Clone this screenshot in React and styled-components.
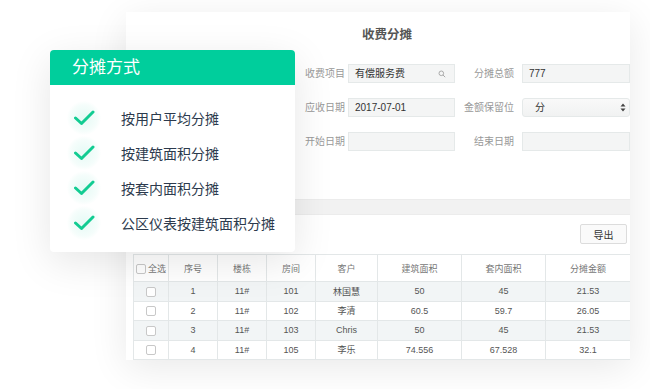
import React from 'react';
import styled, { createGlobalStyle } from 'styled-components';

const GlobalStyle = createGlobalStyle`
  html, body {
    margin: 0;
    padding: 0;
    background: #ffffff;
  }
  body {
    font-family: "Liberation Sans", "Noto Sans CJK SC", sans-serif;
  }
`;

const Stage = styled.div`
  position: relative;
  width: 650px;
  height: 389px;
  overflow: hidden;
  padding: 12px 0 0 126px;
  box-sizing: border-box;
  background: #fff;
`;

const Panel = styled.section`
  width: 504px;
  height: 348px;
  background: #fff;
  box-shadow: 0 8px 36px rgba(0, 0, 0, 0.09);
  overflow: hidden;
  display: flex;
  flex-direction: column;
`;

const PanelTitle = styled.h2`
  margin: 14px 0 0;
  padding-left: 18px;
  font-size: 12.5px;
  line-height: 18px;
  font-weight: bold;
  color: #555;
  text-align: center;
`;

const Form = styled.div`
  margin-top: 20px;
  display: grid;
  grid-template-columns: 222px 107px 67px 108px;
  grid-auto-rows: 19px;
  row-gap: 15px;
`;

const Label = styled.label`
  font-size: 10px;
  color: #999;
  text-align: right;
  line-height: 19px;
  padding-right: ${p => (p.$wide ? '8px' : '3px')};
`;

const Field = styled.div`
  height: 19px;
  box-sizing: border-box;
  background: #f4f5f5;
  border: 1px solid #e5e9e9;
  font-size: 10px;
  color: #333;
  line-height: 17px;
  padding: 0 8px 0 6px;
  display: flex;
  align-items: center;
  justify-content: space-between;
  border-radius: 0;
  ${p => p.$select && 'background: linear-gradient(#f9f9f9, #f1f2f2); padding-left: 12px; padding-right: 3px; border-radius: 3px;'}
`;

const Band = styled.div`
  margin-top: 48px;
  height: 18px;
  background: #f2f2f2;
  border-top: 1px solid #ececec;
  border-bottom: 1px solid #ececec;
  box-sizing: border-box;
`;

const Toolbar = styled.div`
  margin-top: 9px;
  display: flex;
  justify-content: flex-end;
  padding-right: 3px;
`;

const Button = styled.button`
  width: 47px;
  height: 20px;
  border: 1px solid #dcdcdc;
  border-radius: 2px;
  background: #fafafa;
  font-family: inherit;
  font-size: 10px;
  color: #333;
  padding: 0;
`;

const Table = styled.table`
  margin: 10px 0 0 7px;
  border-collapse: collapse;
  table-layout: fixed;
  width: 497px;
  font-size: 9px;
  color: #555;
`;

const Th = styled.th`
  height: 26px;
  font-weight: normal;
  color: #777;
  border: 1px solid #e3e7e8;
  text-align: center;
  padding: 0;
  white-space: nowrap;
`;

const Tr = styled.tr`
  background: ${p => (p.$odd ? '#f2f5f6' : '#fff')};
`;

const Td = styled.td`
  height: 18.5px;
  border: 1px solid #e3e7e8;
  text-align: center;
  padding: 0;
`;

const Box = styled.span`
  display: inline-block;
  width: 8px;
  height: 8px;
  border: 1px solid #c8c8c8;
  border-radius: 2px;
  background: #fff;
  vertical-align: middle;
  margin-right: ${p => (p.$label ? '2px' : '0')};
`;

const Card = styled.div`
  position: absolute;
  left: 50px;
  top: 50px;
  width: 245px;
  height: 202px;
  background: #fff;
  border-radius: 4px;
  overflow: hidden;
  box-shadow: 0 10px 40px rgba(0, 0, 0, 0.1);
`;

const CardHead = styled.div`
  height: 35px;
  background: #00ce9c;
  color: #fff;
  font-size: 17px;
  line-height: 35px;
  padding-left: 22px;
`;

const List = styled.ul`
  list-style: none;
  margin: 0;
  padding: 15px 0 0 0;
`;

const Item = styled.li`
  height: 35px;
  display: flex;
  align-items: center;
  font-size: 14px;
  color: #2c3a4d;
`;

const CheckWrap = styled.span`
  width: 34px;
  height: 34px;
  margin: 0 20px 0 17px;
  border-radius: 50%;
  background: radial-gradient(circle, rgba(0, 206, 156, 0.1) 0%, rgba(0, 206, 156, 0.04) 55%, rgba(0, 206, 156, 0) 72%);
  display: flex;
  align-items: center;
  justify-content: center;
  flex: none;
`;

const Check = () => (
  <svg width="22" height="16" viewBox="0 0 22 16">
    <path d="M2.5 8 L8.5 13.5 L20 2" fill="none" stroke="#12cc92" strokeWidth="3" strokeLinecap="round" strokeLinejoin="round" />
  </svg>
);

const Search = () => (
  <svg width="8" height="8" viewBox="0 0 8 8">
    <circle cx="3.3" cy="3.3" r="2.3" fill="none" stroke="#aaa" strokeWidth="1" />
    <path d="M5 5 L7.2 7.2" stroke="#aaa" strokeWidth="1" />
  </svg>
);

const Arrows = () => (
  <svg width="6" height="9" viewBox="0 0 6 9">
    <path d="M3 0.5 L5.5 3.5 L0.5 3.5 Z M3 8.5 L5.5 5.5 L0.5 5.5 Z" fill="#444" />
  </svg>
);

const methods = ['按用户平均分摊', '按建筑面积分摊', '按套内面积分摊', '公区仪表按建筑面积分摊'];

const rows = [
  ['1', '11#', '101', '林国慧', '50', '45', '21.53'],
  ['2', '11#', '102', '李清', '60.5', '59.7', '26.05'],
  ['3', '11#', '103', 'Chris', '50', '45', '21.53'],
  ['4', '11#', '105', '李乐', '74.556', '67.528', '32.1'],
];

const widths = [35, 49, 49, 49, 62, 84, 84, 85];
const heads = ['序号', '楼栋', '房间', '客户', '建筑面积', '套内面积', '分摊金额'];

export default function App() {
  return (
    <Stage>
      <GlobalStyle />
      <Panel>
        <PanelTitle>收费分摊</PanelTitle>
        <Form>
          <Label>收费项目</Label>
          <Field>有偿服务费<Search /></Field>
          <Label $wide>分摊总额</Label>
          <Field>777</Field>

          <Label>应收日期</Label>
          <Field>2017-07-01</Field>
          <Label $wide>金额保留位</Label>
          <Field $select>分<Arrows /></Field>

          <Label>开始日期</Label>
          <Field />
          <Label $wide>结束日期</Label>
          <Field />
        </Form>
        <Band />
        <Toolbar>
          <Button>导出</Button>
        </Toolbar>
        <Table>
          <colgroup>
            {widths.map((w, i) => <col key={i} style={{ width: w }} />)}
          </colgroup>
          <thead>
            <tr>
              <Th><Box $label />全选</Th>
              {heads.map(h => <Th key={h}>{h}</Th>)}
            </tr>
          </thead>
          <tbody>
            {rows.map((r, i) => (
              <Tr key={i} $odd={i % 2 === 0}>
                <Td><Box /></Td>
                {r.map((c, j) => <Td key={j}>{c}</Td>)}
              </Tr>
            ))}
          </tbody>
        </Table>
      </Panel>

      <Card>
        <CardHead>分摊方式</CardHead>
        <List>
          {methods.map(m => (
            <Item key={m}>
              <CheckWrap><Check /></CheckWrap>
              {m}
            </Item>
          ))}
        </List>
      </Card>
    </Stage>
  );
}
